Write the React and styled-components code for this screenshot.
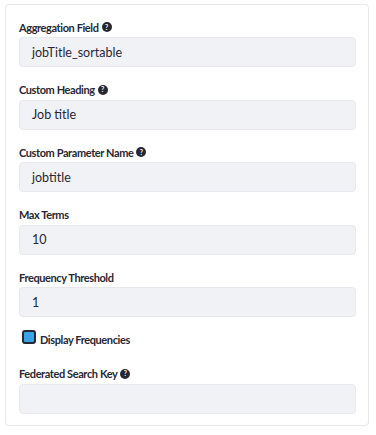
import React from "react"
import styled, { createGlobalStyle } from "styled-components"

const GlobalStyle = createGlobalStyle`
  body {
    margin: 0;
    background: #ffffff;
    font-family: "Source Sans Pro", Lato, "Liberation Sans", sans-serif;
    color: #272833;
  }
`

const Card = styled.div`
  box-sizing: border-box;
  width: 364px;
  margin: 4px 0 0 5px;
  padding: 14px 12px 11px 13px;
  border: 1px solid #e7e7ed;
  border-radius: 4px;
  background: #fff;
`

const Group = styled.div`
  margin-bottom: ${props => (props.last ? 0 : "14.5px")};
`

const Label = styled.label`
  display: flex;
  align-items: center;
  height: 16px;
  margin-bottom: 2px;
  font-size: 11px;
  font-weight: 700;
  letter-spacing: -0.4px;
  color: #272833;
`

const Help = styled.span`
  display: inline-flex;
  align-items: center;
  justify-content: center;
  width: 10px;
  height: 10px;
  margin-left: 3px;
  border-radius: 50%;
  background: #272833;
  color: #fff;
  font-size: 7px;
  font-weight: 700;
  line-height: 1;
  letter-spacing: 0;
`

const Input = styled.div`
  box-sizing: border-box;
  height: 30px;
  padding: 0 12px;
  display: flex;
  align-items: center;
  border: 1px solid #e7e7ed;
  border-radius: 4px;
  background: #f1f2f5;
  font-size: 12.5px;
  color: #272833;
`

const CheckRow = styled.div`
  display: flex;
  align-items: flex-end;
  height: 14px;
  margin: -2px 0 22px 3px;
`

const Box = styled.span`
  box-sizing: border-box;
  width: 14px;
  height: 14px;
  border: 2px solid #272833;
  border-radius: 3px;
  background: #38a3e6;
`

const CheckLabel = styled.span`
  margin-left: 4px;
  margin-bottom: -1px;
  font-size: 11px;
  font-weight: 700;
  letter-spacing: -0.4px;
  line-height: 11px;
`

const Field = ({ label, help, value, last }) => (
  <Group last={last}>
    <Label>
      {label}
      {help && <Help>?</Help>}
    </Label>
    <Input>{value}</Input>
  </Group>
)

export default function App() {
  return (
    <>
      <GlobalStyle />
      <Card>
        <Field label="Aggregation Field" help value="jobTitle_sortable" />
        <Field label="Custom Heading" help value="Job title" />
        <Field label="Custom Parameter Name" help value="jobtitle" />
        <Field label="Max Terms" value="10" />
        <Field label="Frequency Threshold" value="1" />
        <CheckRow>
          <Box />
          <CheckLabel>Display Frequencies</CheckLabel>
        </CheckRow>
        <Field label="Federated Search Key" help value="" last />
      </Card>
    </>
  )
}
